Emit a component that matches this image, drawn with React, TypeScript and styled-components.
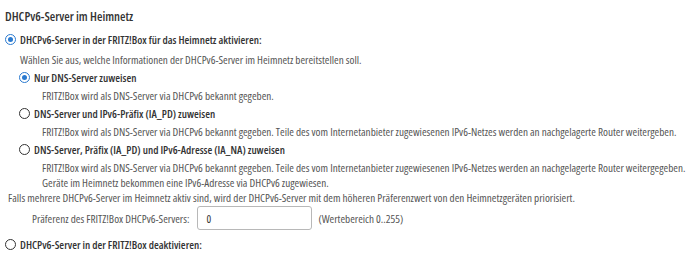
import React, { useState } from 'react';
import styled, { createGlobalStyle } from 'styled-components';

const GlobalStyle = createGlobalStyle`
  body {
    margin: 0;
    background: #ffffff;
    font-family: "Open Sans", Lato, sans-serif;
    font-stretch: condensed;
    color: #333333;
  }
`;

const Page = styled.div`
  width: 689px;
  height: 256px;
  overflow: hidden;
  padding: 8px 0 0 5px;
  box-sizing: border-box;
`;

const Title = styled.h3`
  margin: 0 0 7px 0;
  font-size: 12.5px;
  line-height: 17px;
  font-weight: 600;
  color: #333333;
`;

const Option = styled.label<{ $indent?: number }>`
  display: flex;
  align-items: center;
  gap: 4px;
  margin-left: ${({ $indent }) => $indent || 0}px;
  height: 15px;
  font-size: 11px;
  font-weight: 600;
  color: #333333;
  cursor: pointer;
`;

const Dot = styled.span<{ $checked: boolean }>`
  width: 11px;
  height: 11px;
  border-radius: 50%;
  border: 1.3px solid ${({ $checked }) => ($checked ? '#2a7ad0' : '#333333')};
  display: flex;
  align-items: center;
  justify-content: center;
  box-sizing: border-box;
  flex-shrink: 0;

  &::after {
    content: '';
    width: 5px;
    height: 5px;
    border-radius: 50%;
    background: #2a7ad0;
    display: ${({ $checked }) => ($checked ? 'block' : 'none')};
  }
`;

const Hint = styled.p<{ $indent?: number }>`
  margin: 0;
  margin-left: ${({ $indent }) => $indent || 0}px;
  font-size: 11.2px;
  line-height: 15px;
  color: #555555;
  white-space: nowrap;
`;

const Intro = styled(Hint)`
  margin-top: 5px;
  margin-bottom: 3px;
`;

const Group = styled.div<{ $last?: boolean }>`
  display: flex;
  flex-direction: column;
  gap: 3px;
  margin-bottom: ${({ $last }) => ($last ? 0 : 3)}px;
`;

const PrefRow = styled.div`
  display: flex;
  align-items: center;
  margin: 1px 0 7px 27px;
  font-size: 11.2px;
  color: #555555;
`;

const PrefInput = styled.input`
  width: 115px;
  height: 24px;
  margin: 0 6px 0 8px;
  box-sizing: border-box;
  border: 1px solid #b8b8b8;
  border-radius: 3px;
  padding: 0 8px;
  font-family: inherit;
  font-stretch: condensed;
  font-size: 11px;
  color: #333333;
`;

const modes = [
  {
    key: 'dns',
    label: 'Nur DNS-Server zuweisen',
    hint: ['FRITZ!Box wird als DNS-Server via DHCPv6 bekannt gegeben.'],
  },
  {
    key: 'pd',
    label: 'DNS-Server und IPv6-Präfix (IA_PD) zuweisen',
    hint: [
      'FRITZ!Box wird als DNS-Server via DHCPv6 bekannt gegeben. Teile des vom Internetanbieter zugewiesenen IPv6-Netzes werden an nachgelagerte Router weitergeben.',
    ],
  },
  {
    key: 'na',
    label: 'DNS-Server, Präfix (IA_PD) und IPv6-Adresse (IA_NA) zuweisen',
    hint: [
      'FRITZ!Box wird als DNS-Server via DHCPv6 bekannt gegeben. Teile des vom Internetanbieter zugewiesenen IPv6-Netzes werden an nachgelagerte Router weitergegeben.',
      'Geräte im Heimnetz bekommen eine IPv6-Adresse via DHCPv6 zugewiesen.',
    ],
  },
];

const App: React.FC = () => {
  const [enabled, setEnabled] = useState(true);
  const [mode, setMode] = useState('dns');
  const [pref, setPref] = useState('0');

  return (
    <Page>
      <GlobalStyle />
      <Title>DHCPv6-Server im Heimnetz</Title>
      <Option onClick={() => setEnabled(true)}>
        <Dot $checked={enabled} />
        DHCPv6-Server in der FRITZ!Box für das Heimnetz aktivieren:
      </Option>
      <Intro $indent={15}>
        Wählen Sie aus, welche Informationen der DHCPv6-Server im Heimnetz bereitstellen soll.
      </Intro>
      {modes.map((m, i) => (
        <Group key={m.key} $last={i === modes.length - 1}>
          <Option $indent={14} onClick={() => setMode(m.key)}>
            <Dot $checked={mode === m.key} />
            {m.label}
          </Option>
          <div>
            {m.hint.map((h) => (
              <Hint key={h} $indent={37}>{h}</Hint>
            ))}
          </div>
        </Group>
      ))}
      <Hint $indent={3}>
        Falls mehrere DHCPv6-Server im Heimnetz aktiv sind, wird der DHCPv6-Server mit dem höheren Präferenzwert von den Heimnetzgeräten priorisiert.
      </Hint>
      <PrefRow>
        Präferenz des FRITZ!Box DHCPv6-Servers:
        <PrefInput value={pref} onChange={(e) => setPref(e.target.value)} />
        (Wertebereich 0..255)
      </PrefRow>
      <Option onClick={() => setEnabled(false)}>
        <Dot $checked={!enabled} />
        DHCPv6-Server in der FRITZ!Box deaktivieren:
      </Option>
    </Page>
  );
};

export default App;
